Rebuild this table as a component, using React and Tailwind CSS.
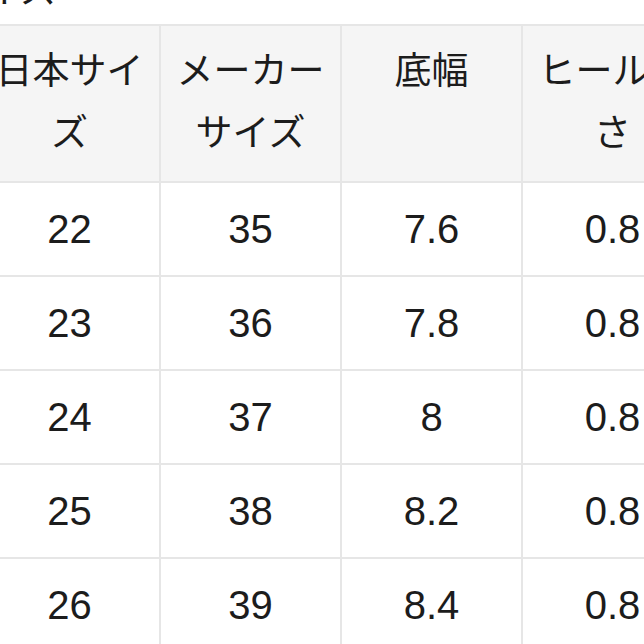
const headers = ['日本サイズ', 'メーカーサイズ', '底幅', 'ヒール高さ']

const rows = [
  ['22', '35', '7.6', '0.8'],
  ['23', '36', '7.8', '0.8'],
  ['24', '37', '8', '0.8'],
  ['25', '38', '8.2', '0.8'],
  ['26', '39', '8.4', '0.8'],
]

const App = () => {
  return (
    <div className="w-[644px] h-[644px] overflow-hidden bg-white text-[#1c1c1c] font-['Liberation_Sans','Noto_Sans_CJK_JP',sans-serif]">
      <div className="-ml-[53px] -mt-[28px] mb-[14px] h-[38px] text-[37px] leading-[38px] whitespace-nowrap">
        サイズ
      </div>
      <div className="-ml-[22px] w-max grid grid-cols-[repeat(4,179px)] gap-[2px] p-[2px] bg-[#e6e6e6]">
        {headers.map((h) => (
          <div
            key={h}
            className="h-[155px] bg-[#f5f5f5] px-[12px] pt-[15px] text-center text-[37px] leading-[62px]"
          >
            {h}
          </div>
        ))}
        {rows.map((r, i) =>
          r.map((c, j) => (
            <div
              key={i + '-' + j}
              className="h-[92px] bg-white flex items-center justify-center text-[40px]"
            >
              {c}
            </div>
          ))
        )}
      </div>
    </div>
  )
}

export default App
